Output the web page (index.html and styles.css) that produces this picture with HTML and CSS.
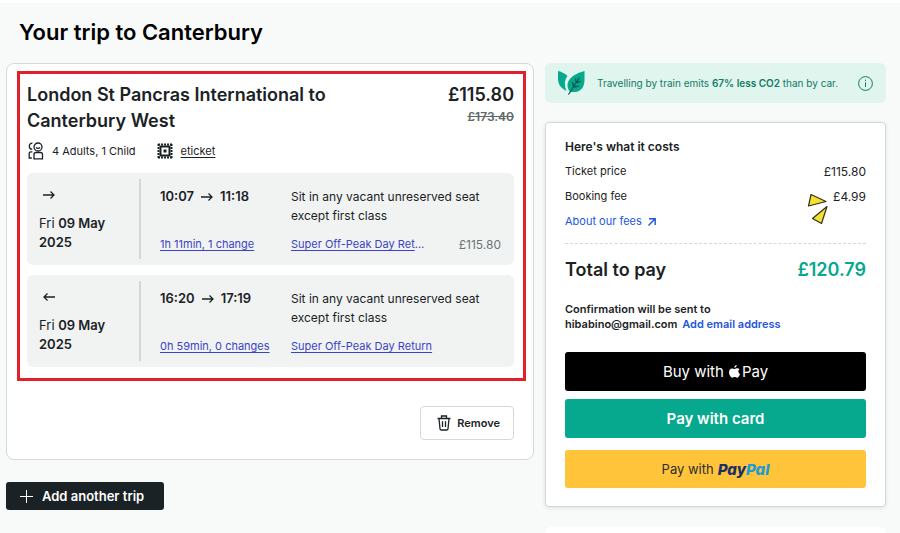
FILE: index.html
```html
<!DOCTYPE html>
<html lang="en">
<head>
    <meta charset="UTF-8">
    <meta name="viewport" content="width=device-width, initial-scale=1.0">
    <title>Your trip to Canterbury</title>
    <link rel="stylesheet" href="styles.css">
</head>
<body>
    <h1 class="page-title">Your trip to Canterbury</h1>
    <main class="layout">
        <div class="basket">
            <section class="trip-card">
                <div class="trip-highlight">
                    <header class="trip-header">
                        <h2 class="trip-title">London St Pancras International to Canterbury West</h2>
                        <div class="trip-prices">
                            <div class="trip-price">£115.80</div>
                            <s class="trip-old-price">£173.40</s>
                        </div>
                    </header>
                    <div class="trip-meta">
                        <svg class="people-icon" width="16" height="18" viewBox="0 0 16 18" fill="none" stroke="#1b2225" stroke-width="1.3">
                            <circle cx="10" cy="5" r="4"/>
                            <path d="M8 5.500c1 1.200 3 1.200 4 0"/>
                            <path d="M6 16.800v-4.300a2 2 0 0 1 2-2h4.500a2 2 0 0 1 2 2v4.300z"/>
                            <path d="M4.500 1.200C2.500 1 1.300 2.500 1.300 4.200c0 1.700 1.200 3 2.900 3.100M4.300 9.800H3a1.800 1.800 0 0 0-1.800 1.800V16h2.600"/>
                        </svg>
                        <span>4 Adults, 1 Child</span>
                        <svg class="ticket-icon" width="16" height="16" viewBox="0 0 16 16" fill="none" stroke="#1b2225">
                            <rect x="3.500" y="3.500" width="9" height="9" stroke-width="2"/>
                            <rect x="6.500" y="6.500" width="3" height="3" fill="#1b2225" stroke="none"/>
                            <path d="M1 1.500h14M1 14.500h14" stroke-width="2" stroke-dasharray="2 1"/>
                            <path d="M1.500 1v14M14.500 1v14" stroke-width="2" stroke-dasharray="2 1"/>
                        </svg>
                        <a href="#" class="eticket-link">eticket</a>
                    </div>

                    <article class="journey">
                        <div class="journey-date">
                            <svg class="arrow" width="12" height="10" viewBox="0 0 12 10"><path d="M0 5h11M7.500 1.500 11 5 7.500 8.500"/></svg>
                            <p>Fri <b>09 May</b> <b>2025</b></p>
                        </div>
                        <div class="journey-time">
                            <div class="times">10:07 <svg class="arrow" width="12" height="10" viewBox="0 0 12 10"><path d="M0 5h11M7.500 1.500 11 5 7.500 8.500"/></svg> 11:18</div>
                            <a href="#" class="journey-link">1h 11min, 1 change</a>
                        </div>
                        <div class="journey-seat">
                            <p>Sit in any vacant unreserved seat except first class</p>
                            <div class="fare">
                                <div class="fare-name"><a href="#" class="journey-link">Super Off-Peak Day Return</a></div>
                                <span class="fare-price">£115.80</span>
                            </div>
                        </div>
                    </article>

                    <article class="journey">
                        <div class="journey-date">
                            <svg class="arrow" width="12" height="10" viewBox="0 0 12 10"><path d="M12 5H1M4.500 1.500 1 5l3.500 3.500"/></svg>
                            <p>Fri <b>09 May</b> <b>2025</b></p>
                        </div>
                        <div class="journey-time">
                            <div class="times">16:20 <svg class="arrow" width="12" height="10" viewBox="0 0 12 10"><path d="M0 5h11M7.500 1.500 11 5 7.500 8.500"/></svg> 17:19</div>
                            <a href="#" class="journey-link">0h 59min, 0 changes</a>
                        </div>
                        <div class="journey-seat">
                            <p>Sit in any vacant unreserved seat except first class</p>
                            <div class="fare">
                                <a href="#" class="journey-link">Super Off-Peak Day Return</a>
                            </div>
                        </div>
                    </article>
                </div>
                <button type="button" class="remove-btn">
                    <svg width="14" height="16" viewBox="0 0 14 16" fill="none" stroke="#1b2225" stroke-width="1.3">
                        <path d="M.5 3.500h13M4.500 3.300V1h5v2.300M2 3.700l1 10.100c.1.800.6 1.200 1.300 1.200h5.400c.7 0 1.200-.4 1.300-1.200l1-10.100M5.500 6.300v5.700M8.500 6.300v5.700"/>
                    </svg>
                    Remove
                </button>
            </section>
            <button type="button" class="add-btn">
                <svg width="13" height="13" viewBox="0 0 13 13" stroke="#fff" stroke-width="1"><path d="M6.500 0v13M0 6.500h13"/></svg>
                Add another trip
            </button>
        </div>

        <aside class="summary">
            <div class="co2-banner">
                <svg class="leaf-icon" width="28" height="26" viewBox="0 0 28 26">
                    <path fill="#06a88e" d="M1 1c4 1 7 2.500 9.500 5 -3 4-3.500 9-1 15C3.500 18 1 14 1 8z"/>
                    <path fill="#06a88e" d="M27.500 1v9c0 7-3.500 11.500-9.500 12-2 .2-4 0-5.500-.8C8 14 11 5.500 27.500 1z"/>
                    <path fill="none" stroke="#0b5c50" stroke-width="1.300" d="M11.500 24.500 22.500 7.500M19 12.500l-.5-4M16.500 16.500 15.500 12M19.500 12.500l4.500-1.200M16.500 17l5.500-.8"/>
                </svg>
                <p>Travelling by train emits <b>67% less CO2</b> than by car.</p>
                <button type="button" class="info-btn" aria-label="More information">
                    <svg width="15" height="15" viewBox="0 0 15 15" fill="none" stroke="#137a66">
                        <circle cx="7.500" cy="7.500" r="6.900"/>
                        <path d="M7.500 6.300V11M7.500 3.700v1.300"/>
                    </svg>
                </button>
            </div>

            <section class="cost-card">
                <h3 class="cost-heading">Here's what it costs</h3>
                <div class="cost-row"><span>Ticket price</span><span class="amount">£115.80</span></div>
                <div class="cost-row">
                    <span>Booking fee</span>
                    <span class="amount">£4.99
                        <svg class="pointer" width="22" height="32" viewBox="0 0 22 32" fill="#f5e131" stroke="#333018" stroke-width="1.200" stroke-linejoin="round">
                            <path d="M4 1.500 19 8.500 1.500 13z"/>
                            <path d="M20 13.500 5.500 25.500l9 5z"/>
                        </svg>
                    </span>
                </div>
                <a href="#" class="fees-link">About our fees
                    <svg width="8" height="8" viewBox="0 0 8 8" fill="none" stroke="#1e56d9" stroke-width="1.400"><path d="M1 .8h6.200V7M7.200.8.500 7.500"/></svg>
                </a>
                <hr class="divider">
                <div class="total">
                    <span>Total to pay</span>
                    <span class="total-price">£120.79</span>
                </div>
                <p class="confirmation">Confirmation will be sent to<br>hibabino@gmail.com <a href="#">Add email address</a></p>
                <button type="button" class="pay-btn apple-btn">Buy with
                    <svg width="11" height="13" viewBox="0 0 11 13" fill="#fff">
                        <path d="M7.700 0c.1 1.500-1 2.800-2.400 2.800C5.200 1.400 6.300.2 7.700 0zM10.500 4.300c-1.700 1.100-1.500 3.700.5 4.600-.5 1.600-1.700 3.700-2.900 3.800-.9 0-1.300-.6-2.400-.6s-1.500.6-2.300.6C1.700 12.700 0 9.700 0 7.300 0 4.900 1.400 3.400 3.100 3.400c1 0 1.700.6 2.500.6s1.600-.7 2.700-.7c.9 0 1.700.4 2.200 1z"/>
                    </svg>Pay
                </button>
                <button type="button" class="pay-btn card-btn">Pay with card</button>
                <button type="button" class="pay-btn paypal-btn">Pay with <span class="paypal">Pay<span>Pal</span></span></button>
            </section>
            <div class="next-card"></div>
        </aside>
    </main>
</body>
</html>
```
FILE: styles.css
```css
* {
    box-sizing: border-box;
}
body {
    display: flex;
    flex-direction: column;
    min-height: 100vh;
    margin: 0;
    border-top: 3px solid #fff;
    background-color: #f8faf9;
    color: #1b2225;
    font-family: Inter, "Liberation Sans", sans-serif;
    font-size: 12px;
    line-height: 19px;
}
h1, h2, h3, p {
    margin: 0;
}
b {
    font-weight: 600;
}
svg {
    flex: none;
}
button {
    font-family: inherit;
    cursor: pointer;
}
.page-title {
    padding: 14px 19px 16px;
    color: #000;
    font-size: 22px;
    font-weight: 600;
    line-height: 30px;
}
.layout {
    display: grid;
    grid-template-columns: minmax(0, 1fr) 341px;
    gap: 11px;
    flex: 1;
    padding: 0 14px 0 6px;
}

/* Trip */
.trip-card {
    display: flex;
    flex-direction: column;
    padding: 7px 7px 19px 10px;
    background: #fff;
    border: 1px solid #d3d8da;
    border-radius: 8px;
}
.trip-highlight {
    padding: 8px 9px 11px 7px;
    border: 3px solid #e0202b;
}
.trip-header {
    display: flex;
    justify-content: space-between;
}
.trip-title {
    max-width: 320px;
    font-size: 18px;
    font-weight: 600;
    line-height: 26px;
}
.trip-prices {
    text-align: right;
}
.trip-price {
    font-size: 18px;
    font-weight: 600;
    line-height: 26px;
}
.trip-old-price {
    display: block;
    color: #60686b;
    font-size: 12px;
    font-weight: 600;
    line-height: 17px;
}
.trip-meta {
    display: flex;
    align-items: center;
    gap: 8px;
    height: 34px;
    margin-bottom: 5px;
    padding-left: 1px;
    font-size: 11px;
}
.ticket-icon {
    margin-left: 13px;
}
.eticket-link {
    color: inherit;
    text-underline-offset: 2px;
}
.journey {
    display: grid;
    grid-template-columns: 102px 150px minmax(0, 1fr);
    padding: 6px 13px 6px 12px;
    background: #f1f3f3;
    border-radius: 6px;
}
.journey + .journey {
    margin-top: 10px;
}
.arrow {
    fill: none;
    stroke: #1b2225;
    stroke-width: 1.3;
}
.journey-date {
    padding: 6px 20px 7px 0;
    border-right: 2px solid #d3d7d8;
    font-size: 13px;
}
.journey-date .arrow {
    display: block;
    margin: 5px 0 14px 4px;
}
.journey-time, .journey-seat {
    display: flex;
    flex-direction: column;
    justify-content: space-between;
    padding: 8px 0 5px;
}
.journey-time {
    padding-left: 19px;
}
.times {
    display: flex;
    align-items: center;
    gap: 7px;
    font-size: 13px;
    font-weight: 600;
}
.journey-link {
    color: #3b43c4;
    font-size: 11px;
    text-underline-offset: 2px;
}
.fare {
    display: flex;
    justify-content: space-between;
}
.fare-name {
    width: 135px;
    overflow: hidden;
    color: #3b43c4;
    font-size: 11px;
    text-overflow: ellipsis;
    white-space: nowrap;
}
.fare-price {
    color: #6c7376;
    font-size: 12px;
}
.remove-btn {
    display: flex;
    align-items: center;
    align-self: flex-end;
    gap: 6px;
    height: 34px;
    margin: 25px 12px 0 0;
    padding: 0 13px 0 16px;
    background: #fff;
    border: 1px solid #d3d8da;
    border-radius: 4px;
    color: #1b2225;
    font-size: 11px;
    font-weight: 600;
}
.add-btn {
    display: flex;
    align-items: center;
    gap: 9px;
    height: 28px;
    margin-top: 22px;
    padding: 0 20px 0 14px;
    background: #1b2225;
    border: none;
    border-radius: 3px;
    color: #fff;
    font-size: 13px;
    font-weight: 600;
}

/* Summary */
.summary {
    display: flex;
    flex-direction: column;
}
.co2-banner {
    display: flex;
    align-items: center;
    height: 40px;
    margin-bottom: 19px;
    padding: 0 13px 0 12px;
    background: #dff5ed;
    border-radius: 6px;
    color: #137a66;
    font-size: 10px;
}
.co2-banner p {
    flex: 1;
    margin-left: 12px;
}
.info-btn {
    display: flex;
    padding: 0;
    background: none;
    border: none;
}
.cost-card {
    padding: 14px 19px 18px;
    background: #fff;
    border: 1px solid #d3d8da;
    border-radius: 4px;
    box-shadow: 0 1px 4px rgba(0, 0, 0, 0.1);
}
.cost-heading {
    margin-bottom: 6px;
    font-size: 12px;
    font-weight: 600;
    line-height: 19px;
}
.cost-row {
    display: flex;
    justify-content: space-between;
    margin-bottom: 6px;
    font-size: 11px;
}
.amount {
    position: relative;
    font-size: 12px;
}
.pointer {
    position: absolute;
    top: 6px;
    right: 37px;
}
.fees-link {
    display: flex;
    align-items: center;
    gap: 6px;
    color: #1e56d9;
    font-size: 11px;
    text-decoration: none;
}
.divider {
    margin: 12px 0 14px;
    border: none;
    border-top: 1px dashed #d3d8da;
}
.total {
    display: flex;
    justify-content: space-between;
    margin-bottom: 20px;
    font-size: 18px;
    font-weight: 600;
    line-height: 24px;
}
.total-price {
    color: #06a88e;
}
.confirmation {
    margin-bottom: 20px;
    font-size: 11px;
    font-weight: 600;
    line-height: 15px;
}
.confirmation a {
    margin-left: 2px;
    color: #1e56d9;
    text-decoration: none;
}
.pay-btn {
    display: flex;
    align-items: center;
    justify-content: center;
    width: 100%;
    height: 39px;
    border: none;
    border-radius: 3px;
    font-size: 15px;
}
.apple-btn {
    margin-bottom: 8px;
    background: #000;
    color: #fff;
}
.apple-btn svg {
    margin: 0 2px 0 5px;
}
.card-btn {
    margin-bottom: 12px;
    background: #06a88e;
    color: #fff;
    font-weight: 600;
}
.paypal-btn {
    gap: 4px;
    height: 38px;
    background: #ffc43a;
    color: #2c2e2f;
    font-size: 13px;
}
.paypal {
    color: #1b3068;
    font-size: 15px;
    font-style: italic;
    font-weight: 800;
}
.paypal span {
    color: #219bd3;
}
.next-card {
    flex: 1;
    margin-top: 20px;
    background: #fff;
    border-radius: 6px 6px 0 0;
}
```
